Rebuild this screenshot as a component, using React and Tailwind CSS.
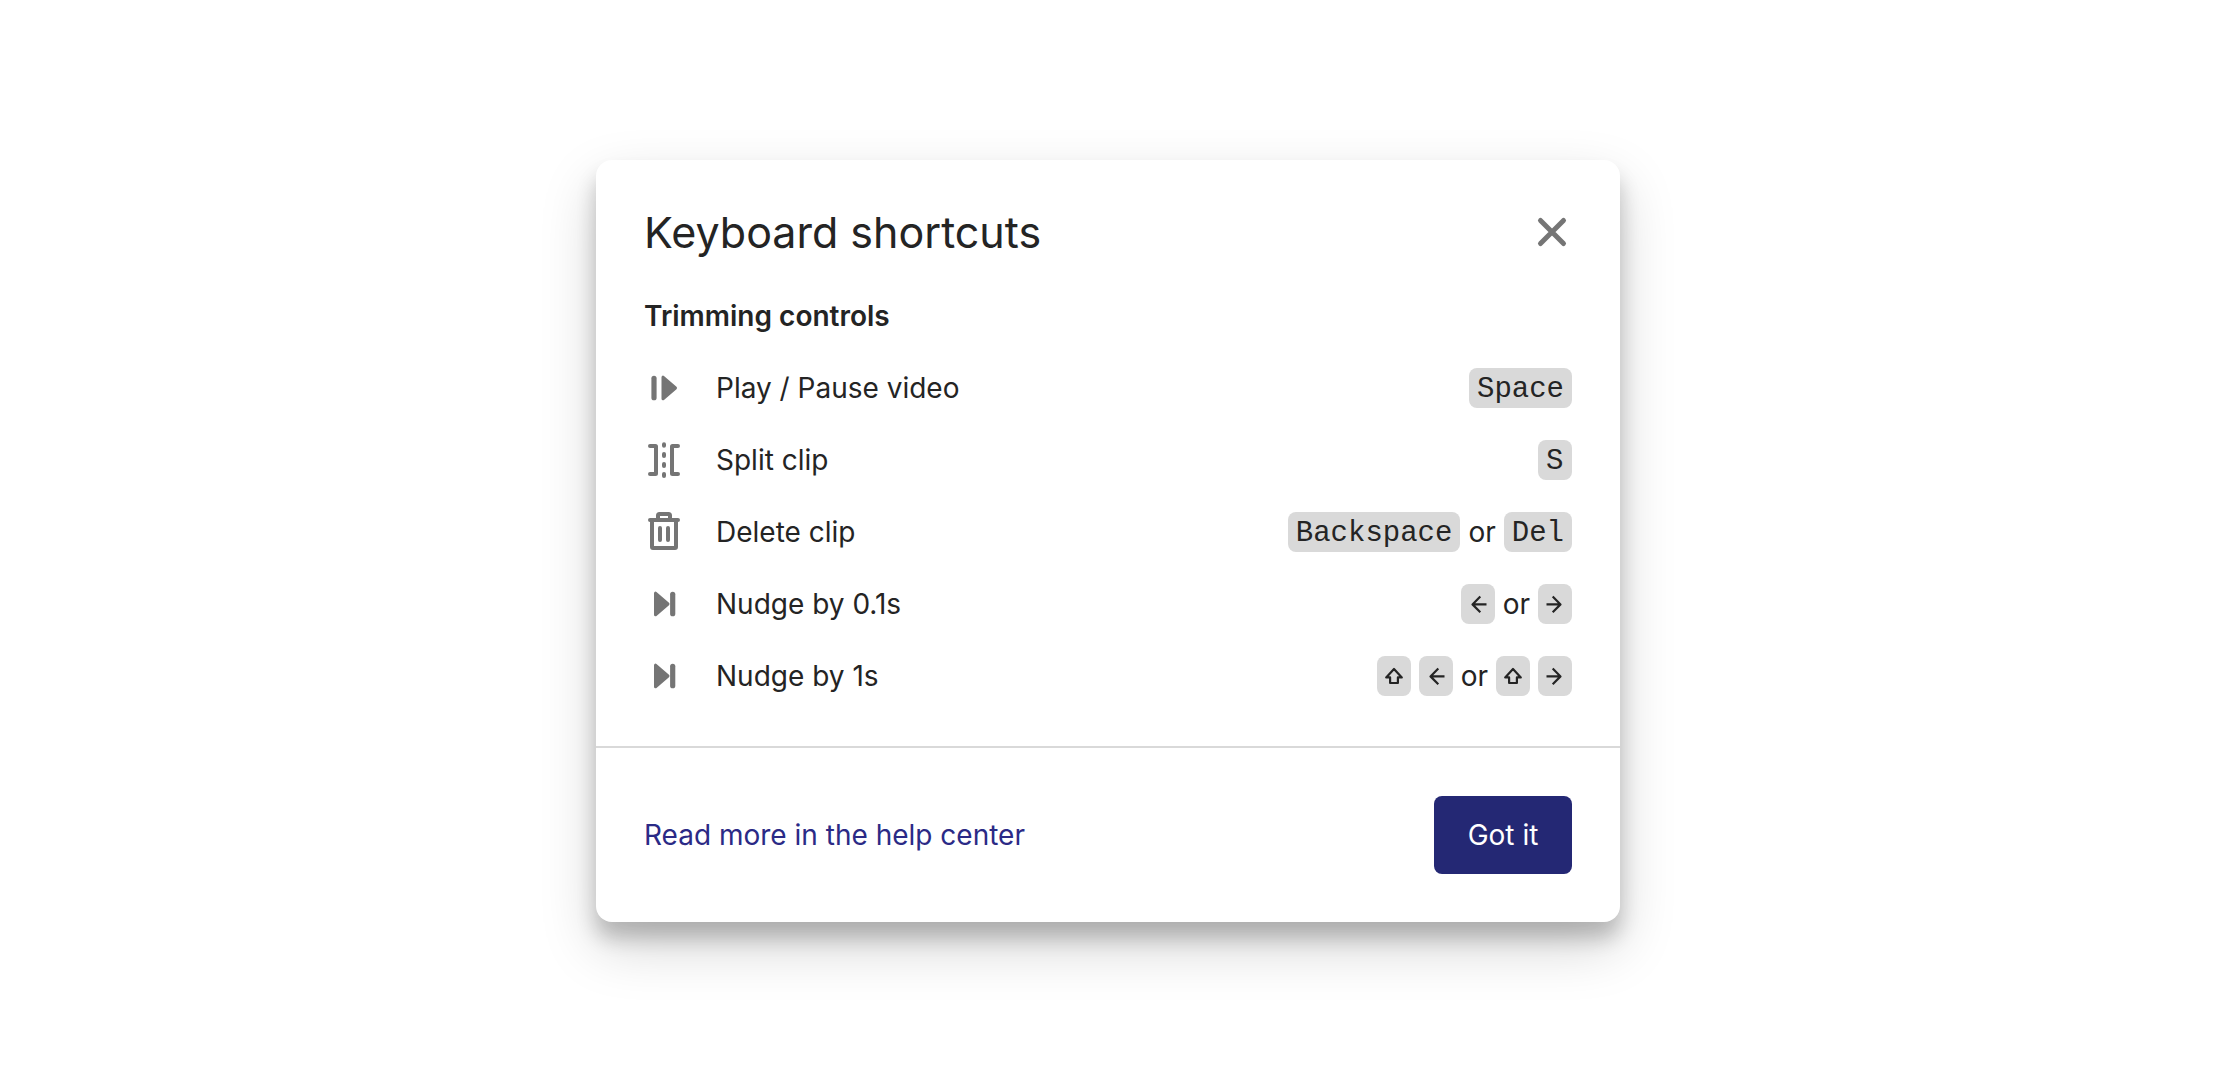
import React from "react";

function Glyph({ children, className = "" }) {
  return (
    <svg
      viewBox="0 0 40 40"
      className={`size-10 shrink-0 ${className}`}
      fill="none"
      stroke="currentColor"
      strokeWidth="4"
      strokeLinecap="round"
      strokeLinejoin="round"
      aria-hidden="true"
    >
      {children}
    </svg>
  );
}

const PlayPauseIcon = () => (
  <Glyph>
    <path strokeWidth="5.2" d="M10 10.3v19.4" />
    <path fill="currentColor" strokeWidth="3" d="M19 9.2v21.6L31.5 20z" />
  </Glyph>
);

const SplitIcon = () => (
  <Glyph>
    <path d="M6 6h5.500q.5 0 .5.5v27q0 .5-.5.5H6M34 6h-5.500q-.5 0-.5.5v27q0 .5.5.5H34" />
    <path d="M20 4.300v1.400M20 14v2M20 24v2M20 34v2" />
  </Glyph>
);

const TrashIcon = () => (
  <Glyph>
    <path d="M6 8h28M8 8v27q0 1 1 1h22q1 0 1-1V8M14 8V3.500Q14 2 15.500 2h9Q26 2 26 3.500V8M16 16v12M24 16v12" />
  </Glyph>
);

const NextIcon = () => (
  <Glyph>
    <path strokeWidth="5.2" d="M28.700 10.300v19.400" />
    <path fill="currentColor" strokeWidth="3" d="M11.500 9.200v21.600L24 20z" />
  </Glyph>
);

const KEY_PATHS = {
  Left: "M25.500 20.400H11.500M19.300 12.500L11.500 20.400L19.300 28.200",
  Right: "M8.500 20.400H22.500M14.700 12.500L22.500 20.400L14.700 28.200",
  Shift: "M17 13L24.800 21.400H20.900V27H13.100V21.400H9.200Z",
};

function Key({ name }) {
  const path = KEY_PATHS[name];
  if (path) {
    return (
      <kbd aria-label={name} className="h-10 rounded-lg bg-[#d9d9d9]">
        <svg
          viewBox="0 0 34 40"
          className="h-10 w-[34px]"
          fill="none"
          stroke="currentColor"
          strokeWidth="2.2"
          strokeLinejoin="round"
          aria-hidden="true"
        >
          <path d={path} />
        </svg>
      </kbd>
    );
  }
  return (
    <kbd className="h-10 min-w-[34px] rounded-lg bg-[#d9d9d9] px-2 pt-1 font-['Liberation_Mono',monospace] text-[29px] leading-9">
      {name}
    </kbd>
  );
}

const SHORTCUTS = [
  { label: "Play / Pause video", Icon: PlayPauseIcon, combos: [["Space"]] },
  { label: "Split clip", Icon: SplitIcon, combos: [["S"]] },
  { label: "Delete clip", Icon: TrashIcon, combos: [["Backspace"], ["Del"]] },
  { label: "Nudge by 0.1s", Icon: NextIcon, combos: [["Left"], ["Right"]] },
  { label: "Nudge by 1s", Icon: NextIcon, combos: [["Shift", "Left"], ["Shift", "Right"]] },
];

export default function App() {
  return (
    <main className="flex min-h-screen items-center justify-center bg-white pb-0.5 font-['Inter',sans-serif] text-[28px] leading-[44px] text-[#242424]">
      <section
        role="dialog"
        aria-labelledby="dialog-title"
        className="w-full max-w-5xl rounded-2xl bg-white shadow-[0_16px_20px_rgba(0,0,0,0.2),0_24px_56px_rgba(0,0,0,0.18)]"
      >
        <div className="border-b-2 border-[#d9d9d9] p-12">
          <header className="mb-[38px] flex h-12 items-center justify-between">
            <h1 id="dialog-title" className="text-[43px] leading-[48px]">
              Keyboard shortcuts
            </h1>
            <button type="button" aria-label="Close" className="text-[#757575]">
              <Glyph>
                <path strokeWidth="5" d="M8.500 8.500l23 23M31.500 8.500l-23 23" />
              </Glyph>
            </button>
          </header>
          <h2 className="mb-7 font-semibold">Trimming controls</h2>
          <ul className="flex flex-col gap-7">
            {SHORTCUTS.map(({ label, Icon, combos }) => (
              <li key={label} className="flex h-11 items-center gap-8">
                <span className="text-[#757575]">
                  <Icon />
                </span>
                <span className="flex-1">{label}</span>
                <span className="flex items-center gap-2">
                  {combos.map((keys, i) => (
                    <React.Fragment key={i}>
                      {i > 0 && <span>or</span>}
                      {keys.map((name) => (
                        <Key key={name} name={name} />
                      ))}
                    </React.Fragment>
                  ))}
                </span>
              </li>
            ))}
          </ul>
        </div>
        <footer className="flex items-center justify-between p-12">
          <a href="#help" className="text-[#2b2a86]">
            Read more in the help center
          </a>
          <button type="button" className="h-[78px] min-w-[138px] rounded-lg bg-[#242874] px-8 text-white">
            Got it
          </button>
        </footer>
      </section>
    </main>
  );
}
